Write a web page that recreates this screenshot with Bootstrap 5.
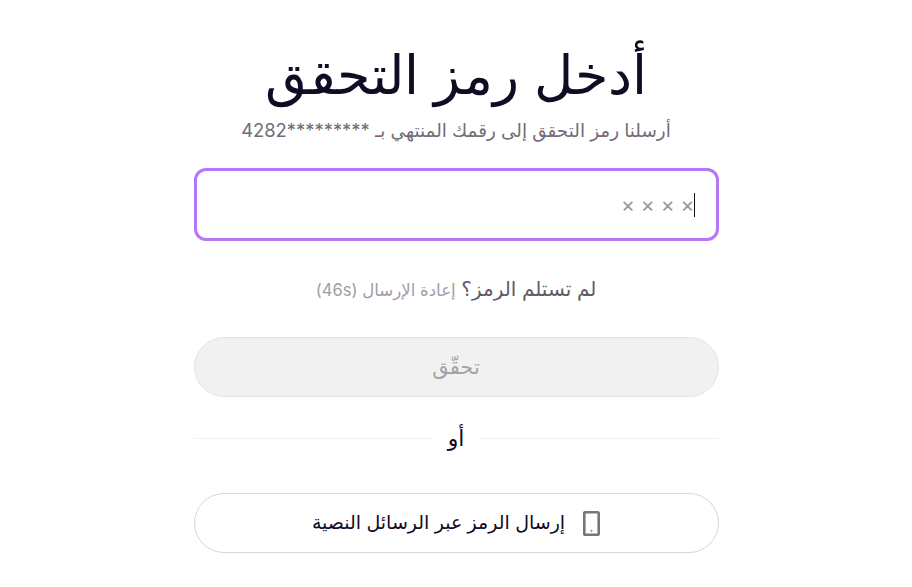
<!DOCTYPE html>
<html lang="ar" dir="rtl"><head><meta charset="utf-8">
<link href="https://cdn.jsdelivr.net/npm/bootstrap@5.3.0/dist/css/bootstrap.min.css" rel="stylesheet">
<style>
body{font-family:Inter,"Noto Sans","DejaVu Sans",sans-serif;background:#fff;color:#0f0a1e;}
.otp-wrap{width:525px;margin:0 auto;padding-top:40px;}
.otp-title{font-size:54px;font-weight:300;line-height:70px;margin:0;color:#120b24;}
.otp-sub{font-size:18.4px;line-height:24px;color:#726d78;margin:8px 0 0;}
.otp-box{height:73px;border:3px solid #b377f7;border-radius:12px;margin-top:26px;padding:0 21px;font-size:21px;color:#9a9a9a;letter-spacing:6px;}
.otp-caret{width:1px;height:24px;background:#111;margin-left:-7px;}
.otp-resend{font-size:20px;color:#5f5b66;margin-top:35px;line-height:26px;}
.otp-resend span{font-size:16.6px;color:#a09da6;}
.otp-btn{height:60px;border-radius:30px;font-size:21px;width:100%;}
.otp-off{background:#f1f1f1;border:1px solid #e4e4e4;color:#a5a3a8;margin-top:34px;}
.otp-or{margin-top:11px;height:60px;font-size:22px;color:#0f0a1e;}
.otp-or i{flex:1;height:1px;background:#f1f1f1;}
.otp-sms{background:#fff;border:1px solid #d5d5dc;color:#120b24;font-size:19px;margin-top:25px;gap:18px;}
</style></head><body>
<div class="otp-wrap text-center">
<h1 class="otp-title">أدخل رمز التحقق</h1>
<p class="otp-sub">أرسلنا رمز التحقق إلى رقمك المنتهي بـ <span dir="ltr">4282*********</span></p>
<div class="otp-box d-flex align-items-center"><span class="otp-caret"></span><span>××××</span></div>
<div class="otp-resend">لم تستلم الرمز؟ <span>إعادة الإرسال (46s)</span></div>
<button class="otp-btn otp-off d-block" disabled>تحقّق</button>
<div class="otp-or d-flex align-items-center gap-3"><i></i><span>أو</span><i></i></div>
<button class="otp-btn otp-sms d-flex align-items-center justify-content-center">
<svg width="17" height="25" viewBox="0 0 17 25" fill="none"><rect x="1.3" y="1.3" width="14.4" height="22.4" rx=".8" stroke="#77747c" stroke-width="2.6"/><rect x="7.7" y="19" width="1.6" height="1.6" fill="#77747c"/></svg>
<span>إرسال الرمز عبر الرسائل النصية</span></button>
</div>
<script src="https://cdn.jsdelivr.net/npm/bootstrap@5.3.0/dist/js/bootstrap.bundle.min.js"></script>
</body></html>
